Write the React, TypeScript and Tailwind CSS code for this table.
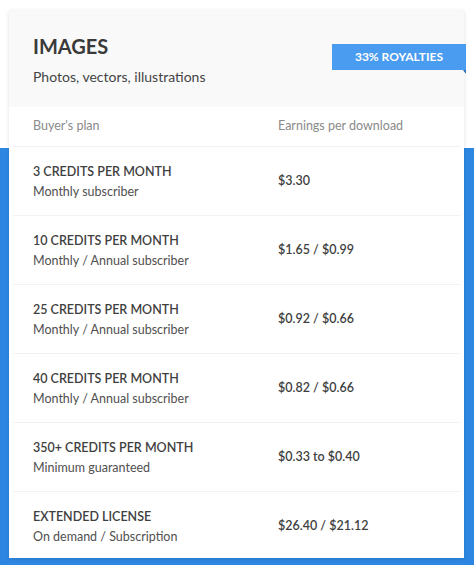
import React from "react";

const rows = [
  { plan: "3 CREDITS PER MONTH", sub: "Monthly subscriber", price: "$3.30" },
  { plan: "10 CREDITS PER MONTH", sub: "Monthly / Annual subscriber", price: "$1.65 / $0.99" },
  { plan: "25 CREDITS PER MONTH", sub: "Monthly / Annual subscriber", price: "$0.92 / $0.66" },
  { plan: "40 CREDITS PER MONTH", sub: "Monthly / Annual subscriber", price: "$0.82 / $0.66" },
  { plan: "350+ CREDITS PER MONTH", sub: "Minimum guaranteed", price: "$0.33 to $0.40" },
  { plan: "EXTENDED LICENSE", sub: "On demand / Subscription", price: "$26.40 / $21.12" },
];

export default function App() {
  return (
    <main
      className="relative w-[474px] h-[565px] overflow-hidden bg-white"
      style={{ fontFamily: "Lato, 'Open Sans', sans-serif" }}
    >
      <div className="absolute left-0 right-0 top-[148px] bottom-0 bg-[#2d87e2]" />

      <div className="relative mx-[9px] mt-[10px] w-[455px] h-[548px] bg-white shadow-[0_1px_4px_rgba(0,0,0,0.12)]">
        <header className="relative h-[97px] bg-[#f9f9f9] pl-[24px] pt-[24px]">
          <h1 className="text-[20px] leading-[24px] font-bold text-[#3a3a3a]">IMAGES</h1>
          <p className="mt-[10px] text-[14px] leading-[18px] text-[#444]">Photos, vectors, illustrations</p>

          <div className="absolute left-[323px] top-[34px] w-[134px] h-[26px] bg-[#4a9cf0] flex items-center justify-center">
            <span className="text-[12px] font-bold text-white">33% ROYALTIES</span>
            <svg className="absolute right-0 top-[26px]" width="3" height="4" viewBox="0 0 3 4">
              <polygon points="0,0 3,0 3,4" fill="#2a6fb8" />
            </svg>
          </div>
        </header>

        <div className="flex items-center h-[40px] pl-[24px] text-[12.5px] text-[#8a8a8a] border-b border-[#f2f2f2] mx-[4px]">
          <div className="w-[245px] -ml-[4px]">Buyer's plan</div>
          <div>Earnings per download</div>
        </div>

        {rows.map((r, i) => (
          <div
            key={i}
            className={`flex items-center h-[69px] mx-[4px] pl-[20px] ${i < rows.length - 1 ? "border-b border-[#f2f2f2]" : ""}`}
          >
            <div className="w-[245px] pt-[1px]">
              <div className="text-[12.5px] leading-[18px] font-semibold text-[#3f3f3f]">{r.plan}</div>
              <div className="mt-[2px] text-[12.5px] leading-[18px] text-[#505050]">{r.sub}</div>
            </div>
            <div className="text-[12.5px] font-semibold text-[#3f3f3f]">{r.price}</div>
          </div>
        ))}
      </div>
    </main>
  );
}
